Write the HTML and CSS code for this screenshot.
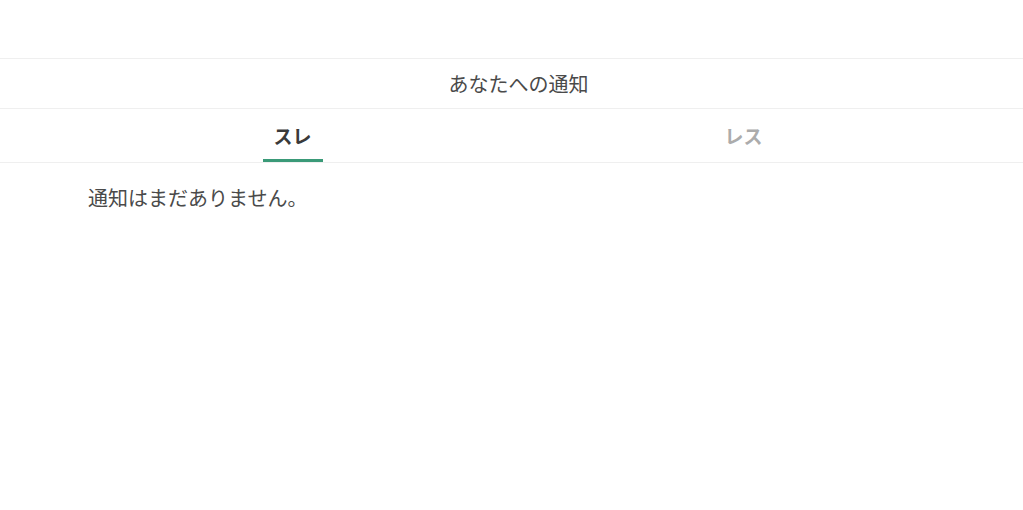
FILE: index.html
```html
<!DOCTYPE html>
<html lang="ja">
<head>
<meta charset="utf-8">
<title>あなたへの通知</title>
<link rel="stylesheet" href="styles.css">
</head>
<body>
<div class="topbar"></div>
<header class="title-bar">あなたへの通知</header>
<nav class="tabs">
  <div class="tabs-inner">
    <div class="tab active"><span class="tab-label">スレ</span></div>
    <div class="tab"><span class="tab-label">レス</span></div>
  </div>
</nav>
<main class="content">
  <p class="empty">通知はまだありません。</p>
</main>
</body>
</html>
```
FILE: styles.css
```css
html, body {
  margin: 0;
  padding: 0;
  background: #fff;
}
body {
  font-family: "Noto Sans CJK JP", "Noto Sans", sans-serif;
  color: #444;
}
.topbar {
  height: 58px;
}
.title-bar {
  border-top: 1px solid #efefef;
  height: 49px;
  display: flex;
  align-items: center;
  justify-content: center;
  padding-left: 14px;
  font-size: 20px;
  color: #4a4a4a;
}
.tabs {
  border-top: 1px solid #efefef;
  border-bottom: 1px solid #efefef;
}
.tabs-inner {
  width: 902px;
  margin-left: 67px;
  display: flex;
}
.tab {
  flex: 1;
  display: flex;
  justify-content: center;
  height: 53px;
  align-items: flex-end;
}
.tab-label {
  display: inline-block;
  font-size: 19px;
  font-weight: bold;
  color: #acacac;
  width: 60px;
  text-align: center;
  padding-bottom: 11px;
  border-bottom: 3px solid transparent;
  line-height: 25px;
}
.tab.active .tab-label {
  color: #3a3a3a;
  border-bottom-color: #3a9a78;
}
.content {
  width: 902px;
  margin-left: 67px;
}
.empty {
  margin: 0;
  padding: 21px 0 0 21px;
  font-size: 20px;
  line-height: 28px;
  color: #4a4a4a;
}
```
